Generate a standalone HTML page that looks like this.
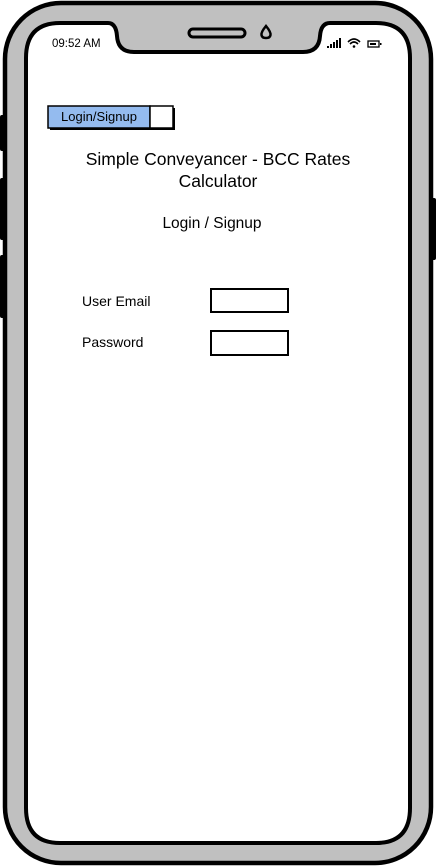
<!DOCTYPE html>
<html><head><meta charset="utf-8"><style>
html,body{margin:0;padding:0;background:#fff;width:436px;height:867px;overflow:hidden;position:relative;font-family:"Liberation Sans",sans-serif;color:#000}
.t{position:absolute;white-space:nowrap}
</style></head><body>
<svg width="436" height="867" style="position:absolute;left:0;top:0">
<rect x="0" y="115" width="5" height="36" rx="2" fill="#000"/>
<rect x="0" y="178" width="5" height="62" rx="2" fill="#000"/>
<rect x="0" y="255" width="5" height="63" rx="2" fill="#000"/>
<rect x="431" y="198" width="5" height="62" rx="2" fill="#000"/>
<rect x="5" y="3" width="426" height="860" rx="56" fill="#c0c0c0" stroke="#000" stroke-width="4.5"/>
<path d="M60 23 H108 Q116 23 117 36 Q118 52 134 52 H303 Q319 52 320 36 Q321 23 330 23 H376 Q410 23 410 58 V808 Q410 843 376 843 H60 Q26 843 26 808 V58 Q26 23 60 23 Z" fill="#fff" stroke="#000" stroke-width="4"/>
<rect x="189" y="29" width="56" height="8" rx="4" fill="none" stroke="#000" stroke-width="3"/>
<path d="M266 26 Q271 32 270.5 35 Q270 38 266 38 Q262 38 261.5 35 Q261 32 266 26 Z" fill="none" stroke="#000" stroke-width="2.5"/>
<rect x="327" y="46" width="2" height="2" fill="#000"/>
<rect x="330" y="44" width="2" height="4" fill="#000"/>
<rect x="333" y="42" width="2" height="6" fill="#000"/>
<rect x="336" y="40" width="2" height="8" fill="#000"/>
<rect x="339" y="38" width="2" height="10" fill="#000"/>
<path d="M348 42 Q354 36 360 42 M350 44 Q354 40 358 44" fill="none" stroke="#000" stroke-width="1.6"/>
<circle cx="354" cy="46.5" r="1.3" fill="#000"/>
<rect x="368" y="41" width="11" height="6" fill="none" stroke="#000" stroke-width="1.3"/>
<rect x="370" y="43" width="6" height="2" fill="#000"/>
<rect x="380" y="43" width="1.5" height="2" fill="#000"/>
<rect x="50" y="108" width="125" height="22" fill="#000"/>
<rect x="48" y="106" width="102" height="22" fill="#94bbef" stroke="#000" stroke-width="1.5"/>
<rect x="150" y="106" width="23" height="22" fill="#fff" stroke="#000" stroke-width="1.5"/>
<rect x="211" y="289" width="77" height="23" fill="#fff" stroke="#000" stroke-width="2"/>
<rect x="211" y="331" width="77" height="24" fill="#fff" stroke="#000" stroke-width="2"/>
</svg>
<div class="t" style="left:52px;top:38px;font-size:11.5px">09:52 AM</div>
<div class="t" style="left:48px;top:109px;width:102px;text-align:center;font-size:13px">Login/Signup</div>
<div class="t" style="left:0;width:436px;top:148px;text-align:center;font-size:17.5px;line-height:22px">Simple Conveyancer - BCC Rates<br>Calculator</div>
<div class="t" style="left:0;width:424px;top:215px;text-align:center;font-size:15.5px">Login / Signup</div>
<div class="t" style="left:82px;top:293px;font-size:14px">User Email</div>
<div class="t" style="left:82px;top:334px;font-size:14px">Password</div>
</body></html>
